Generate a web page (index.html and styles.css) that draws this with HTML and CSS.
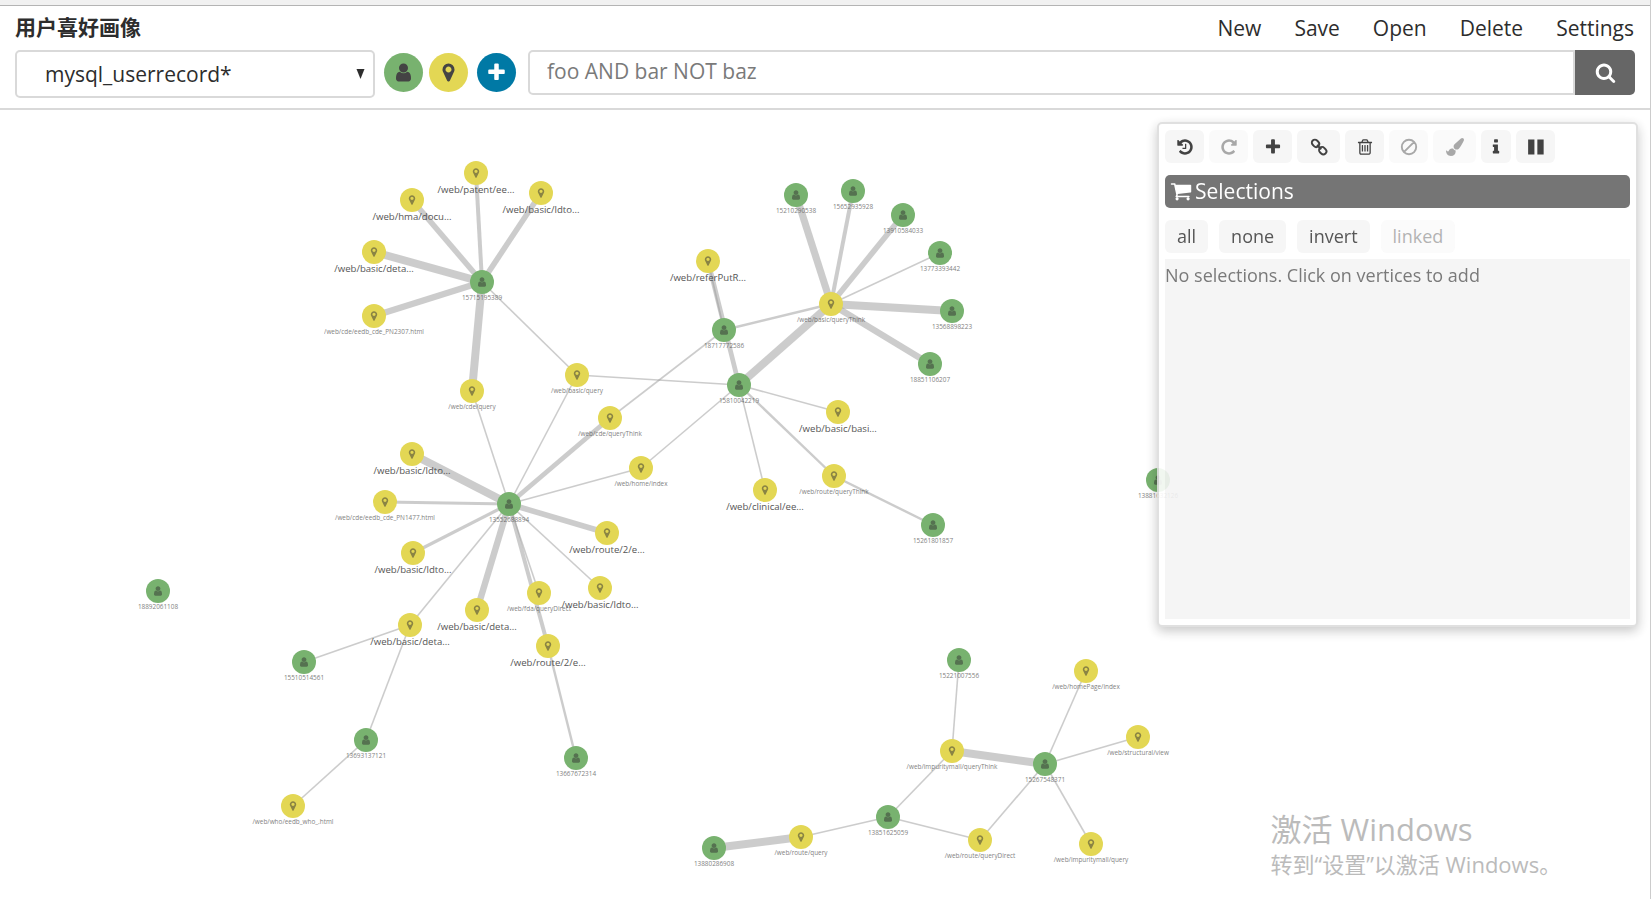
FILE: index.html
```html
<!DOCTYPE html>
<html lang="zh-CN">
<head>
<meta charset="utf-8">
<title>用户喜好画像</title>
<link rel="stylesheet" href="styles.css">
</head>
<body>
<svg class="sprite" aria-hidden="true">
  <symbol id="i-user" viewBox="0 0 1792 1792"><path d="M1536 1399q0 109-62.5 187t-150.5 78h-854q-88 0-150.5-78t-62.5-187q0-85 8.5-160.5t31.5-152 58.5-131 94-89 134.5-34.5q131 128 313 128t313-128q76 0 134.5 34.5t94 89 58.5 131 31.5 152 8.5 160.5zm-256-887q0 159-112.5 271.5t-271.5 112.5-271.5-112.5-112.5-271.5 112.5-271.5 271.5-112.5 271.5 112.5 112.5 271.5z"/></symbol>
  <symbol id="i-pin" viewBox="0 0 1792 1792"><path d="M1152 640q0-106-75-181t-181-75-181 75-75 181 75 181 181 75 181-75 75-181zm256 0q0 109-33 179l-364 774q-16 33-47.5 52t-67.5 19-67.5-19-46.5-52l-365-774q-33-70-33-179 0-212 150-362t362-150 362 150 150 362z"/></symbol>
  <symbol id="i-plus" viewBox="0 0 1792 1792"><path d="M1600 736v192q0 40-28 68t-68 28h-416v416q0 40-28 68t-68 28h-192q-40 0-68-28t-28-68v-416h-416q-40 0-68-28t-28-68v-192q0-40 28-68t68-28h416v-416q0-40 28-68t68-28h192q40 0 68 28t28 68v416h416q40 0 68 28t28 68z"/></symbol>
  <symbol id="i-search" viewBox="0 0 1792 1792"><path d="M1216 832q0-185-131.5-316.5t-316.5-131.5-316.5 131.5-131.5 316.5 131.5 316.5 316.5 131.5 316.5-131.5 131.5-316.5zm512 832q0 52-38 90t-90 38q-54 0-90-38l-343-342q-179 124-399 124-143 0-273.5-55.5t-225-150-150-225-55.5-273.5 55.5-273.5 150-225 225-150 273.5-55.5 273.5 55.5 225 150 150 225 55.5 273.5q0 220-124 399l343 343q37 37 37 90z"/></symbol>
  <symbol id="i-history" viewBox="0 0 1792 1792"><path d="M1664 896q0 156-61 298t-164 245-245 164-298 61q-172 0-327-72.5t-264-204.5q-7-10-6.5-22.5t8.5-20.5l137-138q10-9 25-9 16 2 23 12 73 95 179 147t225 52q104 0 198.5-40.5t163.5-109.5 109.5-163.5 40.5-198.5-40.5-198.5-109.5-163.5-163.5-109.5-198.5-40.5q-98 0-188 35.5t-160 101.5l137 138q31 30 14 69-17 40-59 40h-448q-26 0-45-19t-19-45v-448q0-42 40-59 39-17 69 14l130 129q107-101 244.5-156.5t284.5-55.5q156 0 298 61t245 164 164 245 61 298zm-640-288v448q0 14-9 23t-23 9h-320q-14 0-23-9t-9-23v-64q0-14 9-23t23-9h224v-352q0-14 9-23t23-9h64q14 0 23 9t9 23z"/></symbol>
  <symbol id="i-repeat" viewBox="0 0 1792 1792"><path d="M1664 256v448q0 26-19 45t-45 19h-448q-42 0-59-40-17-39 14-69l138-138q-148-137-349-137-104 0-198.5 40.5t-163.5 109.5-109.5 163.5-40.5 198.5 40.5 198.5 109.5 163.5 163.5 109.5 198.5 40.5q119 0 225-52t179-147q7-10 23-12 15 0 25 9l137 138q9 8 9.5 20.5t-7.5 22.5q-109 132-264 204.5t-327 72.5q-156 0-298-61t-245-164-164-245-61-298 61-298 164-245 245-164 298-61q147 0 284.5 55.5t244.5 156.5l130-129q29-31 70-14 39 17 39 59z"/></symbol>
  <symbol id="i-link" viewBox="0 0 16 16"><g fill="none" stroke="currentColor" stroke-width="1.7"><rect x="1.4" y="2" width="7" height="5.4" rx="2.7" transform="rotate(45 4.9 4.7)"/><rect x="7.8" y="8.6" width="7" height="5.4" rx="2.7" transform="rotate(45 11.3 11.3)"/><path d="M6.2 6.2l3.8 3.8"/></g></symbol>
  <symbol id="i-trash" viewBox="0 0 1792 1792"><path d="M704 736v576q0 14-9 23t-23 9h-64q-14 0-23-9t-9-23v-576q0-14 9-23t23-9h64q14 0 23 9t9 23zm256 0v576q0 14-9 23t-23 9h-64q-14 0-23-9t-9-23v-576q0-14 9-23t23-9h64q14 0 23 9t9 23zm256 0v576q0 14-9 23t-23 9h-64q-14 0-23-9t-9-23v-576q0-14 9-23t23-9h64q14 0 23 9t9 23zm128 724v-948h-896v948q0 22 7 40.5t14.5 27 10.5 8.5h832q3 0 10.5-8.5t14.5-27 7-40.5zm-672-1076h448l-48-117q-7-9-17-11h-317q-10 2-17 11zm928 32v64q0 14-9 23t-23 9h-96v948q0 83-47 143.5t-113 60.5h-832q-66 0-113-58.5t-47-141.5v-952h-96q-14 0-23-9t-9-23v-64q0-14 9-23t23-9h309l70-167q15-37 54-63t79-26h320q40 0 79 26t54 63l70 167h309q14 0 23 9t9 23z"/></symbol>
  <symbol id="i-ban" viewBox="0 0 16 16"><path d="M12.6 3.4L3.4 12.6M14.4 8A6.4 6.4 0 1 1 1.6 8a6.4 6.4 0 0 1 12.8 0z" fill="none" stroke="currentColor" stroke-width="1.7"/></symbol>
  <symbol id="i-brush" viewBox="0 0 1792 1792"><path d="M1615 0q70 0 122.5 46.5t52.5 116.5q0 63-45 151-332 629-465 752-97 91-218 91-126 0-216.5-92.5t-90.5-219.5q0-128 92-212l638-579q59-54 130-54zm-909 1034q39 76 106.5 130t150.5 76l1 71q4 213-129.5 347t-348.5 134q-123 0-218-46.5t-152.5-127.5-86.5-183-29-220q7 5 41 30t62 44.5 59 36.5 46 17q41 0 55-37 25-66 57.5-112.5t69.5-76 88-47.5 103-25.5 125-10.5z"/></symbol>
  <symbol id="i-info" viewBox="0 0 1792 1792"><path d="M1216 1344v128q0 26-19 45t-45 19h-512q-26 0-45-19t-19-45v-128q0-26 19-45t45-19h64v-384h-64q-26 0-45-19t-19-45v-128q0-26 19-45t45-19h384q26 0 45 19t19 45v576h64q26 0 45 19t19 45zm-128-1152v192q0 26-19 45t-45 19h-256q-26 0-45-19t-19-45v-192q0-26 19-45t45-19h256q26 0 45 19t19 45z"/></symbol>
  <symbol id="i-pause" viewBox="0 0 16 16"><path d="M1 1.4h5.6v13.2H1zM9.2 1.4h5.6v13.2H9.2z"/></symbol>
  <symbol id="i-cart" viewBox="0 0 1792 1792"><path d="M704 1536q0 52-38 90t-90 38-90-38-38-90 38-90 90-38 90 38 38 90zm896 0q0 52-38 90t-90 38-90-38-38-90 38-90 90-38 90 38 38 90zm128-1088v512q0 24-16.5 42.5t-40.5 21.5l-1044 122q13 60 13 70 0 16-24 64h920q26 0 45 19t19 45-19 45-45 19h-1024q-26 0-45-19t-19-45q0-11 8-31.5t16-36 21.5-40 15.5-29.5l-177-823h-204q-26 0-45-19t-19-45 19-45 45-19h256q16 0 28.5 6.5t19.5 15.5 13 24.5 8 26 5.5 29.5 4.5 26h1201q26 0 45 19t19 45z"/></symbol>
</svg>

<header class="header">
  <div class="topline">
    <h1 class="title">用户喜好画像</h1>
    <nav class="menu">
      <a href="#new">New</a>
      <a href="#save">Save</a>
      <a href="#open">Open</a>
      <a href="#delete">Delete</a>
      <a href="#settings">Settings</a>
    </nav>
  </div>
  <form class="query">
    <div class="picker">
      <select class="index" aria-label="Index pattern">
        <option>mysql_userrecord*</option>
      </select>
      <svg class="caret" viewBox="0 0 8 10" aria-hidden="true"><path d="M0 0h8L4 10z"/></svg>
    </div>
    <div class="fields">
      <button type="button" class="field user" aria-label="User field"><svg class="field-icon"><use href="#i-user"/></svg></button>
      <button type="button" class="field pin" aria-label="Path field"><svg class="field-icon"><use href="#i-pin"/></svg></button>
      <button type="button" class="field add" aria-label="Add field"><svg class="field-icon"><use href="#i-plus"/></svg></button>
    </div>
    <div class="search">
      <input class="search-text" type="text" aria-label="Search" placeholder="foo AND bar NOT baz">
      <button type="submit" class="search-go" aria-label="Run search"><svg class="field-icon"><use href="#i-search"/></svg></button>
    </div>
  </form>
</header>

<main class="workspace">
  <svg class="graph" id="graph" role="img" aria-label="Relationship graph"></svg>

  <aside class="panel">
    <div class="tools">
      <button class="tool" aria-label="Undo"><svg class="tool-icon"><use href="#i-history"/></svg></button>
      <button class="tool" aria-label="Redo" disabled><svg class="tool-icon"><use href="#i-repeat"/></svg></button>
      <button class="tool" aria-label="Expand"><svg class="tool-icon"><use href="#i-plus"/></svg></button>
      <button class="tool wide" aria-label="Link"><svg class="tool-icon"><use href="#i-link"/></svg></button>
      <button class="tool" aria-label="Delete"><svg class="tool-icon"><use href="#i-trash"/></svg></button>
      <button class="tool" aria-label="Block" disabled><svg class="tool-icon"><use href="#i-ban"/></svg></button>
      <button class="tool wide" aria-label="Style" disabled><svg class="tool-icon"><use href="#i-brush"/></svg></button>
      <button class="tool narrow" aria-label="Drill down"><svg class="tool-icon"><use href="#i-info"/></svg></button>
      <button class="tool" aria-label="Pause layout"><svg class="tool-icon"><use href="#i-pause"/></svg></button>
    </div>
    <h2 class="panel-title"><svg class="cart"><use href="#i-cart"/></svg>Selections</h2>
    <div class="picks">
      <button class="pick">all</button>
      <button class="pick">none</button>
      <button class="pick">invert</button>
      <button class="pick" disabled>linked</button>
    </div>
    <div class="list">No selections. Click on vertices to add</div>
  </aside>

  <div class="watermark">
    <p class="wm-title">激活 Windows</p>
    <p class="wm-text">转到“设置”以激活 Windows。</p>
  </div>
</main>
<script src="graph.js"></script>
</body>
</html>
```
FILE: styles.css
```css
* { box-sizing: border-box; }

body {
  margin: 0;
  min-height: 100vh;
  display: flex;
  flex-direction: column;
  border-right: 1px solid #ccc;
  background: #fff;
  color: #2d2d2d;
  font-family: "Open Sans", "Noto Sans CJK SC", sans-serif;
  overflow: hidden;
}

button, input, select { font: inherit; color: inherit; margin: 0; }
button { border: 0; padding: 0; cursor: pointer; }
svg { fill: currentColor; }
.sprite { display: none; }

.header {
  height: 110px;
  padding: 9px 15px 0;
  border-top: 5px solid #f1f1f1;
  border-bottom: 2px solid #d9d9d9;
  box-shadow: inset 0 1px 0 #b4b4b4;
}
.topline {
  height: 36px;
  display: flex;
  justify-content: space-between;
}
.title {
  margin: 0;
  font-size: 21px;
  line-height: 26px;
  font-weight: 700;
}
.menu {
  display: flex;
  gap: 33px;
  padding-right: 1px;
  font-size: 21px;
  line-height: 28px;
}
.menu a { color: inherit; text-decoration: none; }

.query { display: flex; align-items: flex-start; }
.picker { position: relative; flex: 0 1 360px; min-width: 200px; }
.index {
  display: block;
  width: 100%;
  height: 48px;
  padding: 0 28px;
  appearance: none;
  border: 2px solid #d9d9d9;
  border-radius: 5px;
  background: #fff;
  font-size: 21px;
}
.caret {
  position: absolute;
  right: 10px;
  top: 19px;
  width: 9px;
  height: 10px;
}
.fields { display: flex; gap: 6px; padding: 3px 12px 0 9px; }
.field {
  width: 39px;
  height: 39px;
  border-radius: 50%;
  display: grid;
  place-items: center;
  color: #444;
}
.user { background: #78b26f; }
.pin { background: #e3d754; }
.add { background: #0079a5; color: #fff; margin-left: 3px; }
.field-icon { width: 21px; height: 21px; }
.search { flex: 1; display: flex; height: 45px; }
.search-text {
  flex: 1;
  min-width: 0;
  padding: 0 17px 4px;
  border: 2px solid #d9d9d9;
  border-radius: 5px 0 0 5px;
  background: #fff;
  font-size: 21px;
}
.search-text::placeholder { color: #7a7a7a; opacity: 1; }
.search-go {
  width: 60px;
  border-radius: 0 5px 5px 0;
  background: #666;
  color: #fff;
  display: grid;
  place-items: center;
}

.workspace { position: relative; flex: 1; min-height: 600px; }
.graph { position: absolute; inset: 0; width: 100%; height: 100%; }
.edge { stroke: #999; stroke-opacity: 0.5; }
.node-user { fill: #78b26f; }
.node-pin { fill: #e3d754; }
.node-icon { fill: #333; opacity: 0.5; }
.label { font-size: 8px; fill: #555; opacity: 0.75; text-anchor: middle; }
.label-long { font-size: 12px; fill: #444; opacity: 0.9; }

.panel {
  position: absolute;
  top: 12px;
  right: 12px;
  width: 481px;
  padding: 6px;
  border: 2px solid #ddd;
  border-radius: 5px;
  background: #fff;
  opacity: 0.9;
  box-shadow: 0 4px 12px rgba(0, 0, 0, 0.25);
}
.tools { display: flex; gap: 5px; }
.tool {
  width: 39px;
  height: 33px;
  border-radius: 6px;
  background: #f5f5f5;
  color: #2d2d2d;
  display: grid;
  place-items: center;
}
.wide { width: 43px; }
.narrow { width: 30px; }
.tool-icon { width: 18px; height: 18px; }
.tool:disabled, .pick:disabled { opacity: 0.45; }
.panel-title {
  display: flex;
  align-items: center;
  gap: 3px;
  height: 33px;
  margin: 12px 0;
  padding: 0 5px 1px;
  border-radius: 5px;
  background: #666;
  color: #fff;
  font-size: 21px;
  font-weight: 400;
}
.cart { width: 22px; height: 22px; }
.picks { display: flex; gap: 11px; }
.pick {
  height: 33px;
  padding: 0 12px 2px;
  border-radius: 6px;
  background: #f5f5f5;
  color: #444;
  font-size: 18px;
}
.list {
  height: 360px;
  margin-top: 6px;
  padding-top: 3px;
  background: #f4f4f4;
  color: #6b6b6b;
  font-size: 18px;
  line-height: 26px;
}

.watermark {
  position: absolute;
  left: 77%;
  bottom: 18px;
  color: #bbb;
  pointer-events: none;
}
.watermark p { margin: 0; white-space: nowrap; }
.wm-title { font-size: 31px; line-height: 36px; }
.wm-text { font-size: 22px; line-height: 34px; }
```
FILE: graph.js
```js
const NS = "http://www.w3.org/2000/svg";
const ZOOM = 0.8;
const TOP = 110;

// id: [type, x, y, label]
const nodes = {
  a: ["pin", 476, 173, "/web/patent/ee..."],
  b: ["pin", 541, 193, "/web/basic/ldto..."],
  c: ["pin", 412, 200, "/web/hma/docu..."],
  d: ["pin", 374, 252, "/web/basic/deta..."],
  e: ["pin", 374, 316, "/web/cde/eedb_cde_PN2307.html"],
  f: ["user", 482, 282, "15715195389"],
  g: ["pin", 472, 391, "/web/cde/query"],
  h: ["pin", 577, 375, "/web/basic/query"],
  i: ["user", 796, 195, "15210290538"],
  j: ["user", 853, 191, "15652935928"],
  k: ["user", 903, 215, "13910584033"],
  l: ["user", 940, 253, "13773393442"],
  m: ["user", 952, 311, "13568898223"],
  n: ["user", 930, 364, "18851106207"],
  o: ["pin", 708, 261, "/web/referPutR..."],
  p: ["user", 724, 330, "18717772586"],
  q: ["pin", 831, 304, "/web/basic/queryThink"],
  r: ["user", 739, 385, "15810042219"],
  s: ["pin", 610, 418, "/web/cde/queryThink"],
  t: ["pin", 412, 454, "/web/basic/ldto..."],
  u: ["pin", 385, 502, "/web/cde/eedb_cde_PN1477.html"],
  v: ["user", 509, 504, "13552688894"],
  w: ["pin", 641, 468, "/web/home/index"],
  x: ["pin", 413, 553, "/web/basic/ldto..."],
  y: ["pin", 607, 533, "/web/route/2/e..."],
  z: ["pin", 600, 588, "/web/basic/ldto..."],
  aa: ["pin", 539, 593, "/web/fda/queryDirect"],
  ab: ["pin", 477, 610, "/web/basic/deta..."],
  ac: ["pin", 410, 625, "/web/basic/deta..."],
  ad: ["pin", 548, 646, "/web/route/2/e..."],
  ae: ["pin", 838, 412, "/web/basic/basi..."],
  af: ["pin", 834, 476, "/web/route/queryThink"],
  ag: ["pin", 765, 490, "/web/clinical/ee..."],
  ah: ["user", 933, 525, "15261801857"],
  ai: ["user", 158, 591, "18892061108"],
  aj: ["user", 304, 662, "15510514561"],
  ak: ["user", 366, 740, "13693137121"],
  al: ["user", 576, 758, "13667672314"],
  am: ["pin", 293, 806, "/web/who/eedb_who_.html"],
  an: ["user", 959, 660, "15221007556"],
  ao: ["pin", 1086, 671, "/web/homePage/index"],
  ap: ["pin", 1138, 737, "/web/structural/view"],
  aq: ["pin", 952, 751, "/web/impuritymall/queryThink"],
  ar: ["user", 1045, 764, "15267548371"],
  as: ["user", 888, 817, "13851625059"],
  at: ["user", 714, 848, "13880286908"],
  au: ["pin", 801, 837, "/web/route/query"],
  av: ["pin", 980, 840, "/web/route/queryDirect"],
  aw: ["pin", 1091, 844, "/web/impuritymall/query"],
  ax: ["user", 1158, 480, "13881632126"]
};

// [from, to, weight]
const edges = [
  ["f", "a", 5], ["f", "b", 7], ["f", "c", 7], ["f", "d", 10], ["f", "e", 8],
  ["f", "g", 10], ["f", "h", 2], ["g", "v", 2], ["h", "v", 2], ["h", "r", 2],
  ["s", "v", 6], ["s", "p", 2], ["w", "v", 2], ["w", "r", 2], ["t", "v", 10],
  ["u", "v", 4], ["x", "v", 4], ["y", "v", 7], ["z", "v", 2], ["aa", "v", 2],
  ["ab", "v", 8], ["ac", "v", 2], ["ad", "v", 5], ["ad", "al", 3],
  ["ac", "aj", 2], ["ac", "ak", 2], ["ak", "am", 2],
  ["o", "r", 6], ["o", "p", 2], ["p", "q", 3], ["r", "q", 10],
  ["i", "q", 9], ["j", "q", 5], ["k", "q", 7], ["l", "q", 2], ["m", "q", 10], ["n", "q", 8],
  ["r", "ae", 2], ["r", "af", 3], ["r", "ag", 2], ["af", "ah", 3],
  ["an", "aq", 2], ["aq", "ar", 10], ["aq", "as", 2], ["ar", "ao", 2], ["ar", "ap", 2],
  ["ar", "av", 2], ["ar", "aw", 2], ["as", "av", 2], ["as", "au", 2], ["au", "at", 10]
];

function add(parent, tag, attrs) {
  const el = document.createElementNS(NS, tag);
  for (const key in attrs) el.setAttribute(key, attrs[key]);
  parent.appendChild(el);
  return el;
}

const view = add(document.getElementById("graph"), "g", { transform: `scale(${ZOOM})` });
const pos = id => [nodes[id][1] / ZOOM, (nodes[id][2] - TOP) / ZOOM];

for (const [from, to, weight] of edges) {
  const [x1, y1] = pos(from);
  const [x2, y2] = pos(to);
  add(view, "line", { class: "edge", x1, y1, x2, y2, "stroke-width": weight });
}

for (const id in nodes) {
  const [type, , , label] = nodes[id];
  const [x, y] = pos(id);
  const long = label.endsWith("...");
  add(view, "circle", { class: `node-${type}`, cx: x, cy: y, r: 15 });
  add(view, "use", { class: "node-icon", href: `#i-${type}`, x: x - 7, y: y - 7, width: 14, height: 14 });
  add(view, "text", { class: long ? "label label-long" : "label", x, y: y + (long ? 25 : 22) }).textContent = label;
}
```
